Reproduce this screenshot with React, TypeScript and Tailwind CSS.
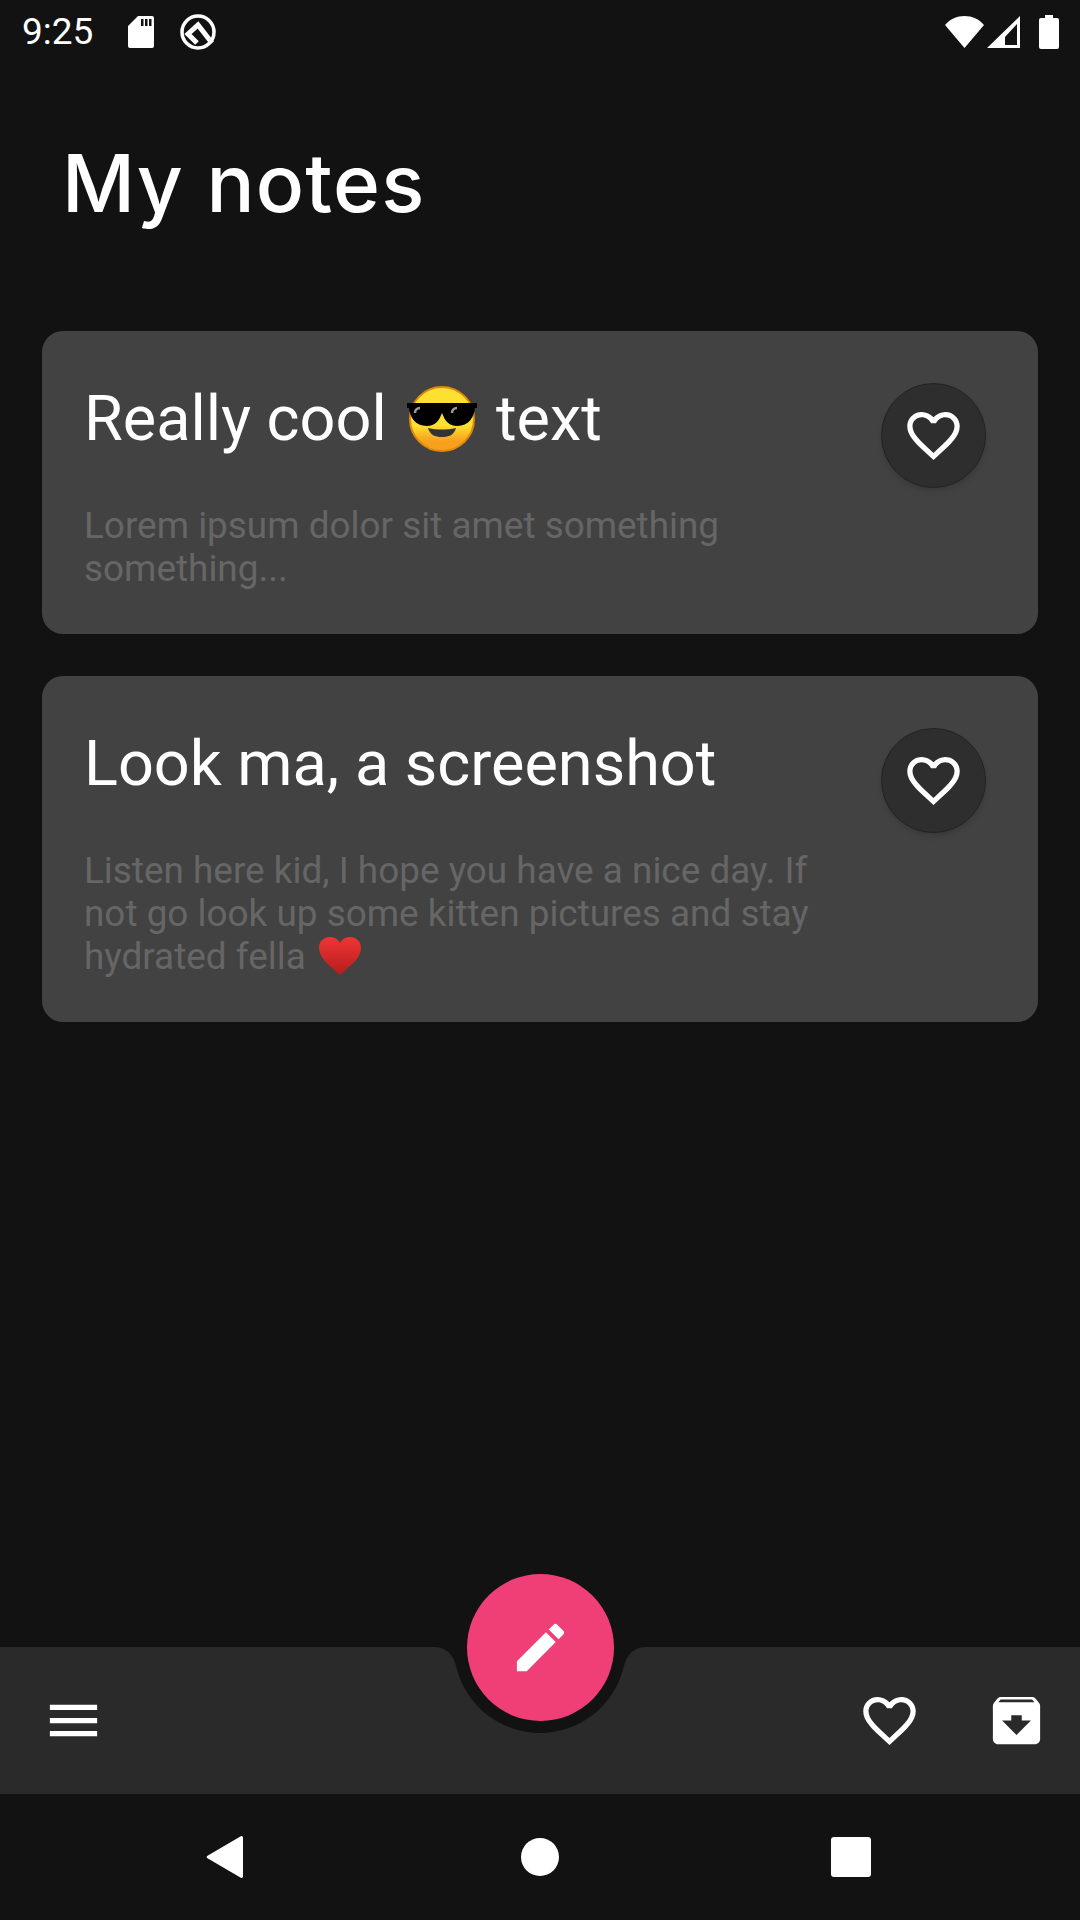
import React from 'react';

const HEART = 'M16.5 3c-1.74 0-3.41.81-4.5 2.09C10.91 3.81 9.24 3 7.5 3 4.42 3 2 5.42 2 8.5c0 3.78 3.4 6.86 8.55 11.54L12 21.35l1.45-1.32C18.6 15.36 22 12.28 22 8.5 22 5.42 19.58 3 16.5 3zm-4.4 15.55l-.1.1-.1-.1C7.14 14.24 4 11.39 4 8.5 4 6.5 5.5 5 7.5 5c1.54 0 3.04.99 3.57 2.36h1.87C13.46 5.99 14.96 5 16.5 5c2 0 3.5 1.5 3.5 3.5 0 2.89-3.14 5.74-7.9 10.05z';

function Icon({ d }: { d: string }) {
  return (
    <svg viewBox="0 0 24 24" className="w-[63px] h-[63px] fill-white shrink-0">
      <path d={d} />
    </svg>
  );
}

function CoolEmoji() {
  return (
    <svg viewBox="0 0 70 66" className="inline-block w-[70px] h-[66px] ml-[5px] mr-[3px] align-[-12px]">
      <defs>
        <linearGradient id="face" x1="0" y1="0" x2="0" y2="1">
          <stop offset="0.6" stopColor="#fde030" />
          <stop offset="0.85" stopColor="#f6a01c" />
        </linearGradient>
      </defs>
      <circle cx="35" cy="33" r="32" fill="url(#face)" stroke="#e08a0a" strokeWidth="2" />
      <path d="M0 17h70v5h-2c-1 9-6 18-18 18-8 0-12-5-15-13-3 8-7 13-15 13-12 0-17-9-18-18H0z" fill="#000" />
      <path d="M8 27c0-3 2-5 5-5M45 27c0-3 2-5 5-5" stroke="#9a9a9a" strokeWidth="2.5" fill="none" />
      <path d="M21 42c9 2 19 2 28 0-2 7-7 9-14 9s-12-2-14-9z" fill="#333" />
    </svg>
  );
}

function RedHeart() {
  return (
    <svg viewBox="0 0 42 38" className="inline-block w-[42px] h-[38px] ml-[4px] align-[-6px]">
      <defs>
        <linearGradient id="redh" x1="0" y1="0" x2="0" y2="1">
          <stop offset="0" stopColor="#ee3535" />
          <stop offset="1" stopColor="#b71c1c" />
        </linearGradient>
      </defs>
      <path d="M21 38C10 28 0 21 0 11 0 4 5 0 11 0c4 0 8 2 10 6 2-4 6-6 10-6 6 0 11 4 11 11 0 10-10 17-21 27z" fill="url(#redh)" />
    </svg>
  );
}

function NoteCard({ title, children }: { title: React.ReactNode; children: React.ReactNode }) {
  return (
    <div className="flex bg-[#424242] rounded-[21px] pl-[42px] pr-[52px] pt-[51px] pb-[44px]">
      <div className="flex-1 pr-[45px]">
        <h2 className="text-[63px] leading-[74px] text-white font-normal h-[122px]">{title}</h2>
        <p className="text-[36.9px] leading-[43px] text-[#666666]">{children}</p>
      </div>
      <button className="w-[105px] h-[105px] mt-[1px] shrink-0 rounded-full bg-[#2e2e2e] border border-[#222222] shadow-md flex items-center justify-center">
        <Icon d={HEART} />
      </button>
    </div>
  );
}

export default function App() {
  return (
    <div className="w-[1080px] h-[1920px] bg-[#121212] flex flex-col font-['Roboto',sans-serif] overflow-hidden">
      {/* Status bar */}
      <div className="h-[63px] flex items-center pl-[22px] pr-[21px] text-white">
        <span className="text-[37px] leading-none">9:25</span>
        <svg viewBox="0 0 26 32" className="w-[26px] h-[32px] ml-[35px]">
          <path d="M10 0h14a2 2 0 0 1 2 2v28a2 2 0 0 1-2 2H2a2 2 0 0 1-2-2V10zM13 3v7h2.5V3zm4 0v7h2.5V3zm4 0v7h2.5V3z" fill="#fff" fillRule="evenodd" />
        </svg>
        <svg viewBox="0 0 36 36" className="w-[36px] h-[36px] ml-[26px]" fill="none" stroke="#fff">
          <circle cx="18" cy="18" r="16" strokeWidth="3.5" />
          <path d="M17 29L8 20L18 11L32 29" strokeWidth="5" />
        </svg>
        <div className="flex-1" />
        <svg viewBox="0 0 39 32" className="w-[39px] h-[32px]">
          <path d="M0 9C5 3 12 0 19.5 0S34 3 39 9L19.5 32z" fill="#fff" />
        </svg>
        <svg viewBox="0 0 33 32" className="w-[33px] h-[32px] ml-[3px]">
          <path d="M33 0v32H0zM30 8L18 21v8h12z" fill="#fff" fillRule="evenodd" />
        </svg>
        <svg viewBox="0 0 20 34" className="w-[20px] h-[34px] ml-[19px]">
          <path d="M6 0h8v3h4a2 2 0 0 1 2 2v27a2 2 0 0 1-2 2H2a2 2 0 0 1-2-2V5a2 2 0 0 1 2-2h4z" fill="#fff" />
        </svg>
      </div>

      {/* Title */}
      <h1 className="pl-[62px] pt-[71px] text-[80px] leading-[98px] tracking-[1.2px] font-medium text-white font-['Inter',sans-serif]">My notes</h1>

      {/* Notes */}
      <div className="flex flex-col gap-[42px] px-[42px] mt-[99px]">
        <NoteCard title={<>Really cool <CoolEmoji /> text</>}>
          Lorem ipsum dolor sit amet something something...
        </NoteCard>
        <NoteCard title="Look ma, a screenshot">
          Listen here kid, I hope you have a nice day. If not go look up some kitten pictures and stay hydrated fella <RedHeart />
        </NoteCard>
      </div>

      <div className="flex-1" />

      {/* Bottom app bar */}
      <div className="relative h-[147px] bg-[#2a2a2a] flex items-center pl-[42px] pr-[32px]">
        <svg viewBox="0 0 240 90" className="absolute left-[420px] top-[-1px] w-[240px] h-[90px]">
          <path d="M13 1Q32 1 36.6 22A86 86 0 0 0 203.4 22Q208 1 227 1V0H13Z" fill="#121212" />
        </svg>
        <button className="absolute left-[466.5px] top-[-73px] w-[147px] h-[147px] rounded-full bg-[#f03e76] flex items-center justify-center">
          <Icon d="M3 17.25V21h3.75L17.81 9.94l-3.75-3.75L3 17.25zM20.71 7.04c.39-.39.39-1.02 0-1.41l-2.34-2.34c-.39-.39-1.02-.39-1.41 0l-1.83 1.83 3.75 3.75 1.83-1.83z" />
        </button>
        <Icon d="M3 18h18v-2H3v2zm0-5h18v-2H3v2zm0-7v2h18V6H3z" />
        <div className="flex-1" />
        <div className="flex gap-[64px] -mt-[1px]">
          <Icon d={HEART} />
          <Icon d="M20.54 5.23l-1.39-1.68C18.88 3.21 18.47 3 18 3H6c-.47 0-.88.21-1.16.55L3.46 5.23C3.17 5.57 3 6.02 3 6.5V19c0 1.1.9 2 2 2h14c1.1 0 2-.9 2-2V6.5c0-.48-.17-.93-.46-1.27zM12 17.5L6.5 12H10v-2h4v2h3.5L12 17.5zM5.12 5l.81-1h12l.94 1H5.12z" />
        </div>
      </div>

      {/* Navigation bar */}
      <div className="h-[126px] flex items-center pl-[206px]">
        <svg viewBox="0 0 39 44" className="w-[39px] h-[44px]">
          <path d="M37 2.5v39a1.5 1.5 0 0 1-2.2 1.2L1.5 23.3a1.5 1.5 0 0 1 0-2.6L34.8 1.3A1.5 1.5 0 0 1 37 2.5z" fill="#fff" />
        </svg>
        <div className="w-[38px] h-[38px] ml-[276px] rounded-full bg-white" />
        <div className="w-[40px] h-[40px] ml-[272px] rounded-[3px] bg-white" />
      </div>
    </div>
  );
}
